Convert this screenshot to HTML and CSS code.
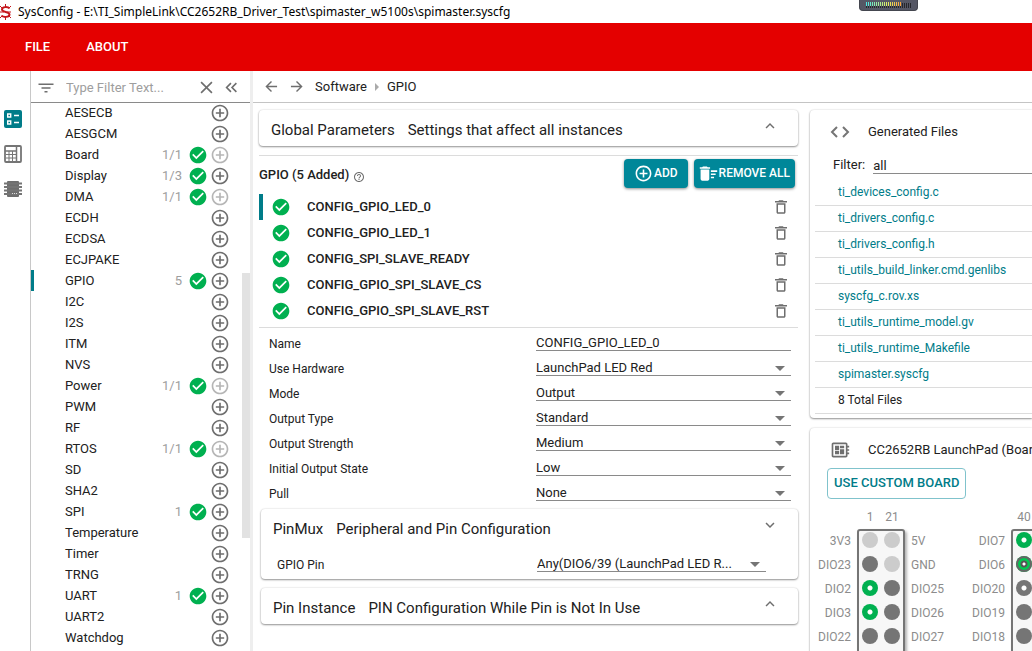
FILE: index.html
```html
<!DOCTYPE html>
<html lang="en">
<head>
<meta charset="utf-8">
<title>SysConfig</title>
<link rel="stylesheet" href="styles.css">
</head>
<body>
<svg class="defs" aria-hidden="true">
  <symbol id="add" viewBox="0 0 24 24"><path d="M13 7h-2v4H7v2h4v4h2v-4h4v-2h-4V7zm-1-5C6.480 2 2 6.480 2 12s4.480 10 10 10 10-4.480 10-10S17.520 2 12 2zm0 18c-4.410 0-8-3.590-8-8s3.590-8 8-8 8 3.590 8 8-3.590 8-8 8z"/></symbol>
  <symbol id="ok" viewBox="0 0 24 24"><path d="M12 2C6.480 2 2 6.480 2 12s4.480 10 10 10 10-4.480 10-10S17.520 2 12 2zm-2 15l-5-5 1.410-1.410L10 14.170l7.590-7.590L19 8l-9 9z"/></symbol>
  <symbol id="trash" viewBox="0 0 24 24"><path d="M6 19c0 1.100.9 2 2 2h8c1.100 0 2-.9 2-2V7H6v12zM8 9h8v10H8V9zm7.500-5l-1-1h-5l-1 1H4v2h16V4z"/></symbol>
  <symbol id="up" viewBox="0 0 24 24"><path d="M12 8l-6 6 1.410 1.410L12 10.830l4.590 4.580L18 14z"/></symbol>
  <symbol id="down" viewBox="0 0 24 24"><path d="M16.590 8.590L12 13.170 7.410 8.590 6 10l6 6 6-6z"/></symbol>
</svg>

<div class="titlebar">
  <svg class="logo" viewBox="0 0 12 16"><path stroke-width="2" d="M9.500 4.500C8 2.500 2 2.500 2 5.500S9.500 7.500 9.500 10.500 3 13.500 1.500 11.500"/><path d="M5.500 0v3M5.500 13v3M0 2l2 2M11 2L9 4M0 8h4M7 8h4M0 14l2-2M11 14l-2-2"/></svg>
  <span>SysConfig - E:\TI_SimpleLink\CC2652RB_Driver_Test\spimaster_w5100s\spimaster.syscfg</span>
  <div class="meter">
    <svg width="46" height="6" viewBox="0 0 46 6">
      <defs><linearGradient id="heat" gradientUnits="userSpaceOnUse" x1="0" y1="0" x2="36" y2="0"><stop offset="0" stop-color="#48e6e6"/><stop offset=".6" stop-color="#e4f060"/><stop offset="1" stop-color="#ff9c38"/></linearGradient></defs>
      <path stroke="#26272c" stroke-width="5" stroke-dasharray="1 1" d="M36 3.500h10"/>
      <path stroke="url(#heat)" stroke-width="4" stroke-dasharray="1 1" d="M0 2h36"/>
      <path stroke="#26272c" stroke-width="2" stroke-dasharray="1 1" d="M0 5h36"/>
    </svg>
  </div>
</div>

<header class="menubar">
  <button type="button">FILE</button>
  <button type="button">ABOUT</button>
</header>

<div class="workspace">
  <nav class="rail">
    <button type="button" aria-label="Modules"><svg viewBox="0 0 18 18"><rect width="18" height="18" rx="2" fill="#007c89"/><path fill="none" stroke="#fff" stroke-width="1.400" d="M3.700 4h3v3h-3zM3.700 11h3v3h-3zM10 5.500h5M10 12.500h5"/></svg></button>
    <button type="button" aria-label="Pin list"><svg viewBox="0 0 18 18"><g fill="none" stroke="#757575"><rect x="1" y="1" width="16" height="16" rx="1" stroke-width="1.800"/><path stroke-width="1.500" d="M12.500 1v16M1 6h11"/><path stroke-width="1" d="M2 9.500h10M2 13h10M5 6v11M8.500 6v11"/></g></svg></button>
    <button type="button" aria-label="Device"><svg viewBox="0 0 18 18"><rect x="3" y="1" width="12" height="16" rx="1"/><path stroke="#757575" stroke-width="2" d="M0 3.500h18M0 7h18M0 10.500h18M0 14h18"/><path stroke="#ddd" d="M8 13.500h1M10 13.500h1M12 13.500h1"/></svg></button>
  </nav>

  <aside class="sidebar">
    <div class="filter">
      <svg class="i18" viewBox="0 0 24 24"><path d="M10 18h4v-2h-4v2zM2 6v2h20V6H2zm4 7h12v-2H6v2z"/></svg>
      <input type="text" placeholder="Type Filter Text..." aria-label="Type Filter Text">
      <button type="button" aria-label="Clear"><svg viewBox="0 0 12 12" class="line"><path d="M1 1l10 10M11 1L1 11"/></svg></button>
      <button type="button" aria-label="Collapse"><svg viewBox="0 0 12 12" class="line"><path d="M5.500 2L1.500 6l4 4M10.500 2l-4 4 4 4"/></svg></button>
    </div>
    <ul class="modules">
      <li><span>AESECB</span><button type="button" aria-label="Add AESECB"><svg><use href="#add"/></svg></button></li>
      <li><span>AESGCM</span><button type="button" aria-label="Add AESGCM"><svg><use href="#add"/></svg></button></li>
      <li><span>Board</span><em>1/1</em><svg class="ok"><use href="#ok"/></svg><button type="button" disabled aria-label="Add Board"><svg><use href="#add"/></svg></button></li>
      <li><span>Display</span><em>1/3</em><svg class="ok"><use href="#ok"/></svg><button type="button" aria-label="Add Display"><svg><use href="#add"/></svg></button></li>
      <li><span>DMA</span><em>1/1</em><svg class="ok"><use href="#ok"/></svg><button type="button" disabled aria-label="Add DMA"><svg><use href="#add"/></svg></button></li>
      <li><span>ECDH</span><button type="button" aria-label="Add ECDH"><svg><use href="#add"/></svg></button></li>
      <li><span>ECDSA</span><button type="button" aria-label="Add ECDSA"><svg><use href="#add"/></svg></button></li>
      <li><span>ECJPAKE</span><button type="button" aria-label="Add ECJPAKE"><svg><use href="#add"/></svg></button></li>
      <li class="current"><span>GPIO</span><em>5</em><svg class="ok"><use href="#ok"/></svg><button type="button" aria-label="Add GPIO"><svg><use href="#add"/></svg></button></li>
      <li><span>I2C</span><button type="button" aria-label="Add I2C"><svg><use href="#add"/></svg></button></li>
      <li><span>I2S</span><button type="button" aria-label="Add I2S"><svg><use href="#add"/></svg></button></li>
      <li><span>ITM</span><button type="button" aria-label="Add ITM"><svg><use href="#add"/></svg></button></li>
      <li><span>NVS</span><button type="button" aria-label="Add NVS"><svg><use href="#add"/></svg></button></li>
      <li><span>Power</span><em>1/1</em><svg class="ok"><use href="#ok"/></svg><button type="button" disabled aria-label="Add Power"><svg><use href="#add"/></svg></button></li>
      <li><span>PWM</span><button type="button" aria-label="Add PWM"><svg><use href="#add"/></svg></button></li>
      <li><span>RF</span><button type="button" aria-label="Add RF"><svg><use href="#add"/></svg></button></li>
      <li><span>RTOS</span><em>1/1</em><svg class="ok"><use href="#ok"/></svg><button type="button" disabled aria-label="Add RTOS"><svg><use href="#add"/></svg></button></li>
      <li><span>SD</span><button type="button" aria-label="Add SD"><svg><use href="#add"/></svg></button></li>
      <li><span>SHA2</span><button type="button" aria-label="Add SHA2"><svg><use href="#add"/></svg></button></li>
      <li><span>SPI</span><em>1</em><svg class="ok"><use href="#ok"/></svg><button type="button" aria-label="Add SPI"><svg><use href="#add"/></svg></button></li>
      <li><span>Temperature</span><button type="button" aria-label="Add Temperature"><svg><use href="#add"/></svg></button></li>
      <li><span>Timer</span><button type="button" aria-label="Add Timer"><svg><use href="#add"/></svg></button></li>
      <li><span>TRNG</span><button type="button" aria-label="Add TRNG"><svg><use href="#add"/></svg></button></li>
      <li><span>UART</span><em>1</em><svg class="ok"><use href="#ok"/></svg><button type="button" aria-label="Add UART"><svg><use href="#add"/></svg></button></li>
      <li><span>UART2</span><button type="button" aria-label="Add UART2"><svg><use href="#add"/></svg></button></li>
      <li><span>Watchdog</span><button type="button" aria-label="Add Watchdog"><svg><use href="#add"/></svg></button></li>
    </ul>
    <div class="thumb"></div>
  </aside>

  <main class="main">
    <div class="crumbs">
      <button type="button" aria-label="Back"><svg viewBox="0 0 14 14" class="line"><path d="M13 7H1.500M7 1.500L1.500 7 7 12.500"/></svg></button>
      <button type="button" aria-label="Forward"><svg viewBox="0 0 14 14" class="line"><path d="M1 7h11.500M7 1.500L12.500 7 7 12.500"/></svg></button>
      <a href="#">Software</a><i class="sep"></i><span>GPIO</span>
    </div>
    <div class="columns">
      <div class="editor">
        <section class="card">
          <h2 class="card-head">Global Parameters<small>Settings that affect all instances</small><button type="button" aria-label="Expand"><svg><use href="#up"/></svg></button></h2>
        </section>

        <section class="instances">
          <div class="toolbar">
            <h3>GPIO (5 Added)</h3>
            <svg class="help" viewBox="0 0 24 24"><path d="M11 18h2v-2h-2v2zm1-16C6.480 2 2 6.480 2 12s4.480 10 10 10 10-4.480 10-10S17.520 2 12 2zm0 18c-4.410 0-8-3.590-8-8s3.590-8 8-8 8 3.590 8 8-3.590 8-8 8zm0-14c-2.210 0-4 1.790-4 4h2c0-1.100.9-2 2-2s2 .9 2 2c0 2-3 1.750-3 5h2c0-2.250 3-2.500 3-5 0-2.210-1.790-4-4-4z"/></svg>
            <button type="button" class="solid"><svg><use href="#add"/></svg>ADD</button>
            <button type="button" class="solid tight"><svg viewBox="0 0 24 24"><path d="M15 16h4v2h-4zm0-8h8v2h-8zm0 4h6v2h-6zM2 19c0 1.100.9 2 2 2h7c1.100 0 2-.9 2-2V7H2v12zM14 4h-3l-1-1H5L4 4H1v2h13z"/></svg>REMOVE ALL</button>
          </div>
          <ul class="inst-list">
            <li class="current"><svg class="ok"><use href="#ok"/></svg><span>CONFIG_GPIO_LED_0</span><button type="button" aria-label="Remove"><svg><use href="#trash"/></svg></button></li>
            <li><svg class="ok"><use href="#ok"/></svg><span>CONFIG_GPIO_LED_1</span><button type="button" aria-label="Remove"><svg><use href="#trash"/></svg></button></li>
            <li><svg class="ok"><use href="#ok"/></svg><span>CONFIG_SPI_SLAVE_READY</span><button type="button" aria-label="Remove"><svg><use href="#trash"/></svg></button></li>
            <li><svg class="ok"><use href="#ok"/></svg><span>CONFIG_GPIO_SPI_SLAVE_CS</span><button type="button" aria-label="Remove"><svg><use href="#trash"/></svg></button></li>
            <li><svg class="ok"><use href="#ok"/></svg><span>CONFIG_GPIO_SPI_SLAVE_RST</span><button type="button" aria-label="Remove"><svg><use href="#trash"/></svg></button></li>
          </ul>
        </section>

        <form class="params">
          <div class="row"><label for="name">Name</label><div class="field"><input id="name" type="text" value="CONFIG_GPIO_LED_0"></div></div>
          <div class="row"><label for="hw">Use Hardware</label><div class="field pick"><select id="hw"><option>LaunchPad LED Red</option></select></div></div>
          <div class="row"><label for="mode">Mode</label><div class="field pick"><select id="mode"><option>Output</option></select></div></div>
          <div class="row"><label for="otype">Output Type</label><div class="field pick"><select id="otype"><option>Standard</option></select></div></div>
          <div class="row"><label for="ostr">Output Strength</label><div class="field pick"><select id="ostr"><option>Medium</option></select></div></div>
          <div class="row"><label for="init">Initial Output State</label><div class="field pick"><select id="init"><option>Low</option></select></div></div>
          <div class="row"><label for="pull">Pull</label><div class="field pick"><select id="pull"><option>None</option></select></div></div>
        </form>

        <section class="card sub">
          <h2 class="card-head">PinMux<small>Peripheral and Pin Configuration</small><button type="button" aria-label="Collapse"><svg><use href="#down"/></svg></button></h2>
          <div class="row pin-row"><label for="pin">GPIO Pin</label><div class="field pick"><select id="pin"><option>Any(DIO6/39 (LaunchPad LED R...</option></select></div></div>
        </section>
        <section class="card sub">
          <h2 class="card-head">Pin Instance<small>PIN Configuration While Pin is Not In Use</small><button type="button" aria-label="Expand"><svg><use href="#up"/></svg></button></h2>
        </section>
      </div>

      <div class="side">
        <section class="card files">
          <h2 class="side-head"><svg viewBox="0 0 20 20" class="code"><path d="M7 5L2 10l5 5M13 5l5 5-5 5"/></svg>Generated Files</h2>
          <div class="file-filter"><label for="ff">Filter:</label><input id="ff" type="text" value="all"></div>
          <ul>
            <li><a href="#">ti_devices_config.c</a></li>
            <li><a href="#">ti_drivers_config.c</a></li>
            <li><a href="#">ti_drivers_config.h</a></li>
            <li><a href="#">ti_utils_build_linker.cmd.genlibs</a></li>
            <li><a href="#">syscfg_c.rov.xs</a></li>
            <li><a href="#">ti_utils_runtime_model.gv</a></li>
            <li><a href="#">ti_utils_runtime_Makefile</a></li>
            <li><a href="#">spimaster.syscfg</a></li>
            <li>8 Total Files</li>
          </ul>
        </section>

        <section class="card board">
          <h2 class="side-head"><svg viewBox="0 0 24 24"><path d="M23 9V7h-2V5c0-1.100-.9-2-2-2H4c-1.100 0-2 .9-2 2v14c0 1.100.9 2 2 2h15c1.100 0 2-.9 2-2v-2h2v-2h-2v-2h2v-2h-2V9h2zm-4 10H4V5h15v14zM6 13h5v4H6zm6-6h5v3h-5zM6 7h5v5H6zm6 4h5v6h-5z"/></svg>CC2652RB LaunchPad (Board)</h2>
          <button type="button" class="outline">USE CUSTOM BOARD</button>
          <div class="headers">
            <ul class="labels left"><li>3V3</li><li>DIO23</li><li>DIO2</li><li>DIO3</li><li>DIO22</li></ul>
            <div class="conn">
              <div class="nums"><span>1</span><span>21</span></div>
              <div class="pins">
                <i class="power"></i><i class="power"></i>
                <i></i><i class="power"></i>
                <i class="used"></i><i></i>
                <i class="used"></i><i></i>
                <i></i><i></i>
              </div>
            </div>
            <ul class="labels"><li>5V</li><li>GND</li><li>DIO25</li><li>DIO26</li><li>DIO27</li></ul>
            <ul class="labels left far"><li>DIO7</li><li>DIO6</li><li>DIO20</li><li>DIO19</li><li>DIO18</li></ul>
            <div class="conn">
              <div class="nums"><span>40</span></div>
              <div class="pins">
                <i class="used"></i><i></i>
                <i class="active"></i><i></i>
                <i class="hollow"></i><i></i>
                <i></i><i></i>
                <i></i><i></i>
              </div>
            </div>
          </div>
        </section>
      </div>
    </div>
  </main>
</div>
</body>
</html>
```

FILE: styles.css
```css
* { box-sizing: border-box; }
html, body { height: 100%; }
body {
  margin: 0;
  display: flex;
  flex-direction: column;
  overflow: hidden;
  background: #fff;
  color: #212121;
  font: 13px/20px Roboto, "Liberation Sans", sans-serif;
}
ul { list-style: none; margin: 0; padding: 0; }
h2, h3 { margin: 0; font-weight: 400; }
a { color: inherit; text-decoration: none; }
button { font: inherit; color: inherit; background: none; border: 0; padding: 0; display: flex; align-items: center; }
input, select { font: inherit; color: inherit; background: none; border: 0; border-radius: 0; padding: 0; outline: 0; min-width: 0; width: 100%; appearance: none; }
svg { display: block; flex: none; fill: #6e6e6e; }
.defs { position: absolute; width: 0; height: 0; }
.line { fill: none; stroke: #6e6e6e; stroke-width: 1.5; }
.ok { width: 20px; height: 20px; fill: #00b050; }

.titlebar { position: relative; flex: none; display: flex; align-items: center; gap: 6px; height: 23px; font: 12px/20px "Noto Sans", sans-serif; color: #000; white-space: nowrap; }
.logo { width: 12px; height: 16px; fill: none; stroke: #c4161c; }
.meter { position: absolute; top: 0; right: 114px; width: 59px; height: 11px; padding: 2px 6px; background: #555765; border: solid #44464f; border-width: 0 1px 1px; border-radius: 0 0 4px 4px; }

.menubar { flex: none; display: flex; align-items: center; gap: 36px; height: 48px; padding-left: 25px; background: #e40000; color: #fff; font-weight: 500; }

.workspace { flex: 1; display: flex; min-height: 0; }
.rail { flex: none; width: 30px; display: flex; flex-direction: column; align-items: flex-start; gap: 17px; padding: 39px 0 0 4px; }
.rail svg { width: 18px; height: 18px; }

.sidebar { position: relative; flex: none; width: 223px; overflow: hidden; border-left: 1px solid #c8c8c8; border-right: 3px solid #eee; }
.filter { position: relative; display: flex; align-items: center; height: 31px; padding: 2px 12px 0 6px; box-shadow: 0 1px 0 #8a8a8a; }
.filter .i18 { width: 18px; height: 18px; margin-right: 11px; }
.filter input { flex: 1; }
.filter input::placeholder { color: #9e9e9e; opacity: 1; }
.filter button { margin-left: 12px; }
.filter button svg { width: 13px; height: 13px; }
.modules li { display: flex; align-items: center; height: 21px; padding: 0 20px 0 34px; }
.modules span { flex: 1; }
.modules em { font-style: normal; color: #9e9e9e; margin-right: 6px; }
.modules button { margin-left: 2px; }
.modules button svg { width: 20px; height: 20px; }
.modules button:disabled { opacity: 0.5; }
.modules .current { box-shadow: inset 3px 0 #007c89; }
.thumb { position: absolute; right: 0; top: 202px; width: 8px; height: 265px; background: #e2e2e2; }

.main { flex: 1; min-width: 0; display: flex; flex-direction: column; }
.crumbs { flex: none; display: flex; align-items: center; height: 32px; padding-left: 12px; border-bottom: 1px solid #c4c4c4; }
.crumbs svg { width: 13px; height: 13px; }
.crumbs button { margin-right: 12px; }
.sep { margin: 0 8px; border: solid transparent; border-width: 4px 0 4px 4px; border-left-color: #aaa; }
.columns { flex: 1; display: grid; grid-template-columns: minmax(0, 539fr) minmax(0, 222fr); gap: 12px; padding: 7px 0 0 6px; min-height: 0; }

.card { background: #fff; border-radius: 4px; box-shadow: 0 1px 2px rgba(0,0,0,.4), 0 0 2px rgba(0,0,0,.15); }
.card-head { display: flex; align-items: center; height: 36px; padding: 4px 19px 0 12px; font-size: 15px; line-height: 20px; white-space: nowrap; }
.card-head small { font-size: inherit; margin-left: 13px; }
.card-head button { margin: -8px 0 0 auto; }
.card-head button svg { width: 18px; height: 18px; }

.instances { margin-top: 9px; border: solid #dcdcdc; border-width: 1px 0; padding-bottom: 3px; }
.toolbar { display: flex; align-items: center; height: 38px; padding: 0 3px 4px 0; }
.toolbar h3 { font-size: 13px; font-weight: 500; line-height: 20px; padding-top: 4px; }
.help { width: 12px; height: 12px; margin: 8px auto 0 4px; }
.solid { height: 29px; padding: 0 10px; color: #fff; background: #008799; border-radius: 4px; box-shadow: 0 1px 3px rgba(0,0,0,.45); font-size: 12px; font-weight: 500; margin-left: 6px; white-space: nowrap; }
.solid svg { width: 19px; height: 19px; fill: #fff; margin-right: 1px; }
.solid.tight { padding: 0 5px; }
.inst-list li { display: flex; align-items: center; height: 26px; padding: 0 8px 0 12px; font-weight: 500; }
.inst-list .current { box-shadow: inset 4px 0 #007c89; }
.inst-list span { flex: 1; margin-left: 16px; }
.inst-list button svg { width: 18px; height: 18px; }

.params { padding: 3px 7px 0 10px; }
.row { display: grid; grid-template-columns: minmax(0, 267fr) minmax(0, 255fr); height: 25px; align-items: center; }
.row label, .files li { font-size: 12px; }
.field { position: relative; align-self: start; margin-top: 3px; height: 17px; border-bottom: 1px solid #8a8a8a; }
.field input, .field select { display: block; height: 18px; line-height: 18px; }
.pick::after { content: ""; position: absolute; right: 6px; top: 7px; border: solid transparent; border-width: 5px 5px 0; border-top-color: #757575; pointer-events: none; }
.sub { margin: 3px 0 0 2px; }
.sub + .sub { margin-top: 9px; }
.pin-row { grid-template-columns: minmax(0, 260fr) minmax(0, 229fr); margin: 7px 32px 0 16px; }
.sub:has(.pin-row) { padding-bottom: 2px; }

.side { display: flex; flex-direction: column; gap: 10px; min-width: 0; }
.side .card { border-radius: 4px 0 0 4px; }
.side-head { display: flex; align-items: center; height: 44px; padding-left: 20px; font-size: 13px; white-space: nowrap; overflow: hidden; }
.side-head svg { width: 20px; height: 20px; margin-right: 18px; }
.side-head .code { fill: none; stroke: #757575; stroke-width: 2; }
.files { padding: 0 0 4px 5px; }
.files .side-head { padding-left: 15px; }
.file-filter { display: flex; align-items: center; gap: 8px; padding-left: 18px; height: 22px; }
.file-filter input { border-bottom: 1px solid #8a8a8a; height: 16px; margin-top: 2px; }
.files li { height: 26px; padding: 3px 0 0 23px; border-bottom: 1px solid #dcdcdc; line-height: 18px; }
.files ul { padding-top: 4px; }
.files li a { color: #007c89; }

.board { flex: 1; min-height: 0; overflow: hidden; }
.outline { height: 31px; margin: -4px 0 0 17px; padding: 0 6px 2px; border: 1px solid #80c3cc; border-radius: 4px; color: #007c89; font-weight: 500; white-space: nowrap; }
.headers { display: flex; margin-top: 8px; color: #8c8c8c; font-size: 12px; }
.labels { flex: none; width: 41px; padding: 22px 0 0 6px; line-height: 24px; }
.labels.left { padding: 22px 6px 0 0; text-align: right; }
.labels.far { width: 65px; }
.conn { flex: none; width: 48px; }
.labels.left:first-child { width: 47px; }
.nums { display: grid; grid-template-columns: 22px 22px; justify-content: center; height: 22px; line-height: 20px; text-align: center; }
.pins { display: grid; grid-template-columns: 16px 16px; gap: 8px 6px; justify-content: center; padding: 1px 0 30px; background: #f7f7f7; border: 2px solid #757575; border-radius: 3px; box-shadow: 2px 2px 3px rgba(0,0,0,.3); }
.pins i { width: 16px; height: 16px; border-radius: 50%; background: #757575; }
.pins .power { background: #ccc; }
.pins .used { background: radial-gradient(circle, #fff 2px, #00b050 3px); }
.pins .hollow { background: radial-gradient(circle, #fff 2px, #757575 3px); }
.pins .active { background: radial-gradient(circle, #fff 1px, #555 2px 3px, #00c850 4px); box-shadow: inset 0 0 0 2px #666; }
```
